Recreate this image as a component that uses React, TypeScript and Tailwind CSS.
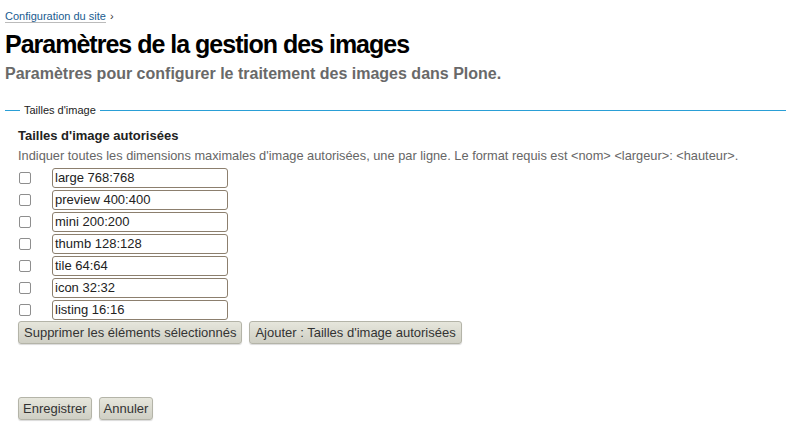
import React from 'react';

const sizes = [
  'large 768:768',
  'preview 400:400',
  'mini 200:200',
  'thumb 128:128',
  'tile 64:64',
  'icon 32:32',
  'listing 16:16',
];

const btn =
  'h-[23px] rounded-[3px] border border-[#b4b4a8] bg-gradient-to-b from-[#e6e6dc] to-[#cfcfc4] text-[13px] leading-none text-[#333] shadow-[0_1px_1px_rgba(0,0,0,0.15)]';

export default function App() {
  return (
    <div className="min-h-[443px] bg-white pl-[5px] pt-[9px] font-['Liberation_Sans',Arial,sans-serif] text-black">
      <div className="text-[11px] leading-[14px]">
        <a className="border-b border-[#bbb] text-[#205c90]">Configuration du site</a>
        <span className="ml-[4px] text-[#333]">›</span>
      </div>

      <h1 className="mt-[7px] text-[25px] font-bold leading-[28px] tracking-[-1px]">
        Paramètres de la gestion des images
      </h1>
      <p className="mt-[6px] text-[16px] font-bold leading-[19px] text-[#696969]">
        Paramètres pour configurer le traitement des images dans Plone.
      </p>

      {/* fieldset legend line */}
      <div className="mt-[20px] flex items-center">
        <span className="h-px w-[15px] bg-[#2a9fd6]" />
        <span className="px-[4px] text-[11px] leading-[14px] text-[#222]">Tailles d'image</span>
        <span className="h-px flex-1 bg-[#2a9fd6]" />
      </div>

      <div className="pl-[13px] pt-[11px]">
        <div className="text-[13px] font-bold leading-[16px] text-[#222]">Tailles d'image autorisées</div>
        <div className="mt-[4px] text-[12.8px] leading-[16px] text-[#666]">
          Indiquer toutes les dimensions maximales d'image autorisées, une par ligne. Le format requis est
          &lt;nom&gt; &lt;largeur&gt;: &lt;hauteur&gt;.
        </div>

        <div className="mt-[4px] flex flex-col gap-[2px]">
          {sizes.map((s) => (
            <div key={s} className="flex h-[20px] items-center">
              <span className="ml-[1px] h-[12px] w-[12px] rounded-[2px] border border-[#8e8e8e] bg-white" />
              <span className="ml-[21px] flex h-[20px] w-[176px] items-center rounded-[3px] border border-[#8c7f6e] bg-white px-[2px] text-[13px] text-[#222]">
                {s}
              </span>
            </div>
          ))}
        </div>

        <div className="mt-[1px] flex gap-[7px]">
          <button className={`${btn} px-[5px]`}>Supprimer les éléments sélectionnés</button>
          <button className={`${btn} px-[5px]`}>Ajouter : Tailles d'image autorisées</button>
        </div>

        <div className="mt-[53px] flex gap-[7px]">
          <button className={`${btn} px-[4px]`}>Enregistrer</button>
          <button className={`${btn} px-[4px]`}>Annuler</button>
        </div>
      </div>
    </div>
  );
}
